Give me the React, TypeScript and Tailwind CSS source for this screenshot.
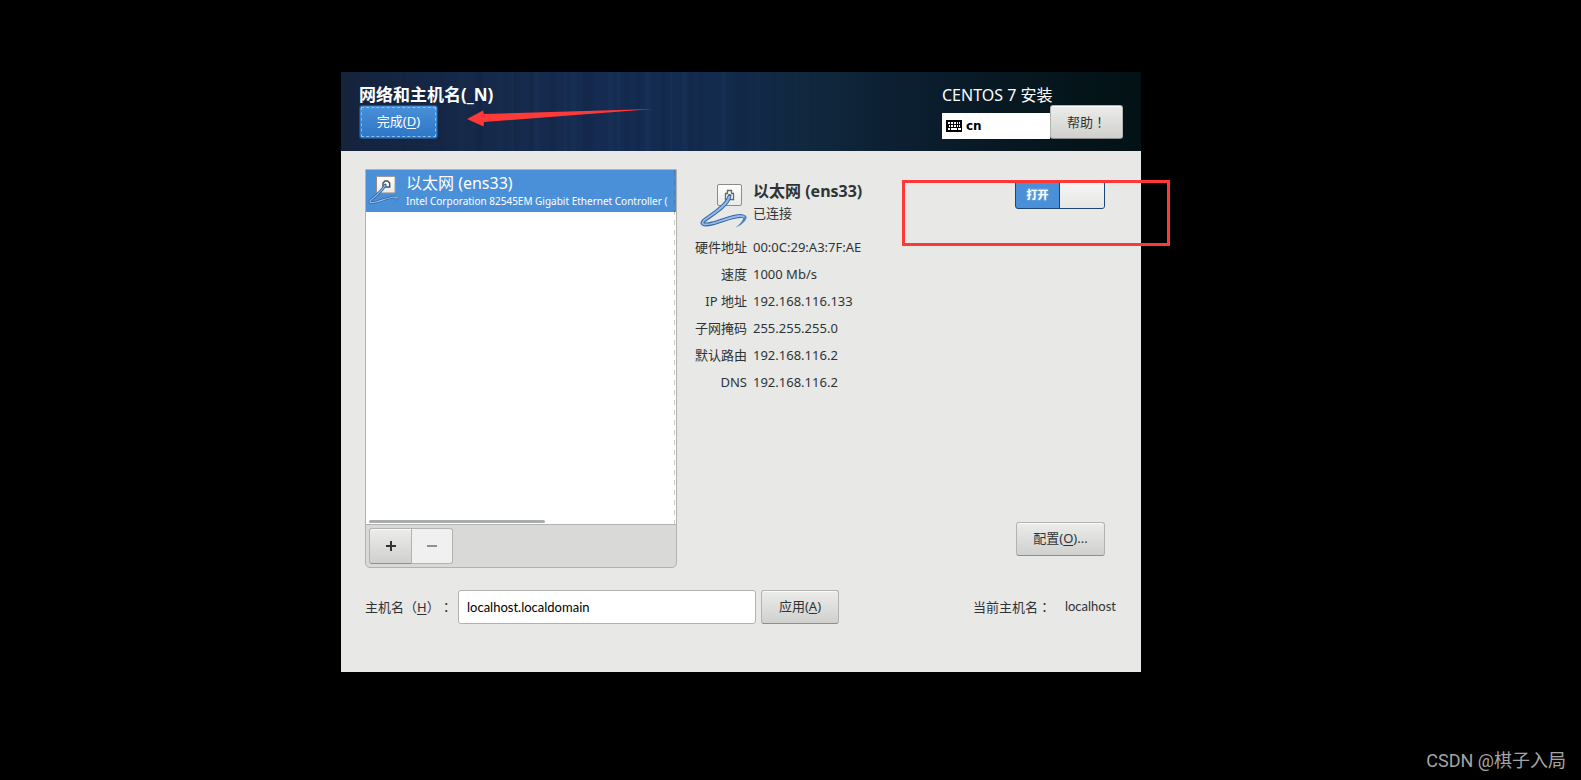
import { useState, type ReactNode } from "react";

const gray =
  "border border-[#b2b2ae] border-b-[#8e8e8a] bg-gradient-to-b from-[#ececeb] to-[#d0d0ce] text-[#2e3436] shadow-[inset_0_1px_0_#fbfbfb]";

function Button({ children, className = "" }: { children: ReactNode; className?: string }) {
  return (
    <button type="button" className={`flex h-[34px] items-center justify-center rounded-[3px] text-[13px] ${gray} ${className}`}>
      <span>{children}</span>
    </button>
  );
}

function Key({ children }: { children: ReactNode }) {
  return <span className="underline underline-offset-2">{children}</span>;
}

function Mark({ children }: { children: ReactNode }) {
  return <span className="inline-block font-['Noto_Sans_CJK_TC',sans-serif]">{children}</span>;
}

function WiredIcon({ className, small = false }: { className: string; small?: boolean }) {
  return (
    <svg viewBox="0 0 48 48" className={className} aria-hidden="true">
      <defs>
        <linearGradient id="plate" x1="0" y1="0" x2="0" y2="1">
          <stop offset="0" stopColor="#ffffff" />
          <stop offset="1" stopColor="#e9e9e7" />
        </linearGradient>
      </defs>
      {small ? (
        <>
          <rect x="12.700" y="2" width="28" height="25" rx="1" fill="url(#plate)" stroke="#8b8d88" strokeWidth="1.500" />
          <path d="M22.500 18v-6l3-3h4l3 3v6z" fill="#fff" stroke="#4e504d" strokeWidth="2.200" />
        </>
      ) : (
        <>
          <rect x="17.500" y="1.500" width="24" height="21" rx="1.500" fill="url(#plate)" stroke="#8b8d88" />
          <path d="M25.500 16.500v-6h2v-3h4v3h2v6z" fill="#fff" stroke="#666864" strokeWidth="1.300" />
        </>
      )}
      <path
        d="M41 31.500C47 31.500 48 34 45 38C43 40.500 39.500 43 35.500 44.500C39 42 43 38 43 35.500C43 34.500 41 34.500 40 34.500Z"
        fill="#4f82c2"
      />
      <path
        d={small ? "M26 15C20 26 8 34 3.500 38.500C1 42 6 42 12 40.500C22 38 32 33 41 33" : "M29.500 13C28 23 9 33 3.500 38C0 42 6 42 12 40.500C22 38 32 33 41 33"}
        fill="none"
        stroke="#3566a4"
        strokeWidth="4"
        strokeLinecap="round"
      />
      <path
        d={small ? "M26 15C20 26 8 34 3.500 38.500C1 42 6 42 12 40.500C22 38 32 33 41 33L44.500 34" : "M29.500 13C28 23 9 33 3.500 38C0 42 6 42 12 40.500C22 38 32 33 41 33L44.500 34"}
        fill="none"
        stroke="#94bbea"
        strokeWidth="1.800"
      />
    </svg>
  );
}

function KeyboardIcon() {
  return (
    <svg viewBox="0 0 16 12" className="h-3 w-4" shapeRendering="crispEdges" aria-hidden="true">
      <rect width="16" height="12" rx="1" fill="#000" />
      <path
        d="M2 2h2v2H2zM5 2h2v2H5zM8 2h2v2H8zM11 2h1v2h-1zM13 2h1v2h-1zM3 5h1v2H3zM5 5h2v2H5zM8 5h2v2H8zM11 5h1v2h-1zM13 5h1v2h-1zM2 8h2v2H2zM5 8h6v2H5zM12 8h3v2h-3z"
        fill="#fff"
      />
    </svg>
  );
}

const details = [
  ["硬件地址", "00:0C:29:A3:7F:AE"],
  ["速度", "1000 Mb/s"],
  ["IP 地址", "192.168.116.133"],
  ["子网掩码", "255.255.255.0"],
  ["默认路由", "192.168.116.2"],
  ["DNS", "192.168.116.2"],
];

function Header() {
  return (
    <header className="relative flex h-[79px] justify-between bg-[linear-gradient(90deg,#15233d_0%,#15294a_18%,#152c52_34%,#132b4e_46%,#11283f_58%,#0c1f31_70%,#06171f_86%,#021214_100%)] px-[18px] text-white">
      <div
        className="absolute inset-0 bg-[repeating-linear-gradient(90deg,transparent_0_7px,rgba(90,140,200,0.04)_9px_12px,transparent_15px_23px,rgba(0,0,0,0.05)_25px_28px,transparent_31px_37px),repeating-linear-gradient(90deg,transparent_0_11px,rgba(120,150,190,0.05)_12px_13px,transparent_14px_29px,rgba(0,0,0,0.05)_30px_34px,transparent_35px_53px)] [mask-image:linear-gradient(90deg,transparent_5%,black_25%,black_42%,transparent_60%)]"
        aria-hidden="true"
      />
      <div className="relative flex flex-col pt-[11px]">
        <h1 className="h-[22px] text-[17px] leading-[24px] font-bold">网络和主机名(_N)</h1>
        <button
          type="button"
          className="flex h-[34px] w-[79px] items-center justify-center rounded-[3px] border border-[#1c5187] bg-gradient-to-b from-[#4a90d9] to-[#2a76c6] text-[13px] outline-1 -outline-offset-3 outline-dashed outline-[#8fbbe8]"
        >
          <span>完成(<Key>D</Key>)</span>
        </button>
      </div>
      <svg viewBox="0 0 186 18" className="absolute top-[37px] left-[126px] h-[18px] w-[186px]" aria-hidden="true">
        <path d="M0 10L16 1.500L17 5L186 0L17 13L16.500 17.500Z" fill="#ff3838" />
      </svg>
      <div className="relative flex w-[181px] flex-col pt-[11px]">
        <p className="h-[22px] text-[16px] leading-[24px]">CENTOS 7 安装</p>
        <div className="flex items-end">
          <div className="flex h-[26px] grow items-center gap-1 bg-white pl-1 font-['DejaVu_Sans',sans-serif] text-[12px] font-bold text-black">
            <KeyboardIcon />
            <span>cn</span>
          </div>
          <Button className="w-[73px]">
            帮助<Mark>！</Mark>
          </Button>
        </div>
      </div>
    </header>
  );
}

function DeviceList() {
  return (
    <section className="flex w-[312px] flex-col overflow-hidden rounded-b-[5px] border border-[#b2b2ae] bg-[#d9d9d7]">
      <div className="relative flex grow flex-col bg-white">
        <div className="flex h-[42px] bg-[#4a90d9] text-white">
          <WiredIcon small className="mt-[5px] ml-[2px] h-8 w-8 shrink-0" />
          <div className="ml-[6px] whitespace-nowrap">
            <p className="h-[24px] text-[16px] leading-[26px]">以太网 (ens33)</p>
            <p className="text-[10px] leading-[14px]">Intel Corporation 82545EM Gigabit Ethernet Controller (</p>
          </div>
        </div>
        <div className="absolute inset-y-0 right-[1px] w-px bg-[repeating-linear-gradient(180deg,rgba(80,80,80,0.3)_0_5px,transparent_5px_10px)]" />
        <div className="mt-auto mb-[1px] ml-[3px] h-[3px] w-[176px] rounded-full bg-[#a9adad]" />
      </div>
      <div className="flex h-[43px] border-t border-[#b2b2ae] p-[3px]">
        <button type="button" aria-label="Add" className={`flex h-9 w-[43px] items-center justify-center rounded-l-[3px] ${gray}`}>
          <svg viewBox="0 0 10 10" className="size-[10px]" aria-hidden="true">
            <path d="M4 0h2v4h4v2H6v4H4V6H0V4h4z" fill="#2e3436" />
          </svg>
        </button>
        <button
          type="button"
          disabled
          aria-label="Remove"
          className="flex h-9 w-[41px] items-center justify-center rounded-r-[3px] border border-l-0 border-[#b2b2ae] bg-[#f0f0f0]"
        >
          <svg viewBox="0 0 10 10" className="size-[10px]" aria-hidden="true">
            <path d="M0 4h10v2H0z" fill="#8d9091" />
          </svg>
        </button>
      </div>
    </section>
  );
}

function Details() {
  const [on, setOn] = useState(true);
  return (
    <section className="relative flex grow flex-col pt-[12px] pr-9 pb-3 pl-[17px]">
      <div className="flex">
        <WiredIcon className="mt-[2px] ml-[6px] h-12 w-12" />
        <div className="ml-[5px]">
          <h2 className="h-[22px] text-[16px] leading-[20px] font-bold">以太网 (ens33)</h2>
          <p className="text-[13px] leading-[20px]">已连接</p>
        </div>
        <button
          type="button"
          role="switch"
          aria-checked={on}
          aria-label="以太网"
          onClick={() => setOn(!on)}
          className="ml-auto flex h-[28px] w-[90px] overflow-hidden rounded-[3px] border border-[#1b4573] bg-[#4a90d9] text-[11px] leading-[26px] font-bold text-white"
        >
          <span className="flex-1 [text-shadow:0_0_2px_#ffffff99]">打开</span>
          <span className="w-[45px] self-stretch border-l border-[#1b4573] bg-gradient-to-b from-[#f6f6f6] to-[#e6e6e4]" />
        </button>
      </div>
      <dl className="mt-[3px] grid grid-cols-[53px_1fr] gap-x-[6px] text-[13px] leading-[27px]">
        {details.map(([label, value]) => (
          <div key={label} className="contents">
            <dt className="text-right">{label}</dt>
            <dd>{value}</dd>
          </div>
        ))}
      </dl>
      <Button className="mt-auto w-[89px] self-end">
        配置(<Key>O</Key>)...
      </Button>
      <div
        className="pointer-events-none absolute top-[11px] -right-[29px] h-[66px] w-[268px] border-3 border-[#ff3838]"
        aria-hidden="true"
      />
    </section>
  );
}

export default function App() {
  return (
    <div className="flex min-h-screen flex-col bg-black pt-[72px] font-['Noto_Sans','Noto_Sans_CJK_SC',sans-serif] text-[#2e3436]">
      <div className="flex justify-center pr-[99px]">
        <main className="flex min-h-[600px] w-[800px] flex-col bg-[#e8e8e6]">
          <Header />
          <div className="flex h-[417px] pt-[18px] pl-6">
            <DeviceList />
            <Details />
          </div>
          <form className="mt-[22px] flex items-center pr-[25px] pl-6 text-[13px]" onSubmit={(e) => e.preventDefault()}>
            <label htmlFor="host" className="w-[93px] whitespace-nowrap">
              主机名（<Key>H</Key>）<Mark>：</Mark>
            </label>
            <input
              id="host"
              defaultValue="localhost.localdomain"
              className="h-[34px] w-[298px] rounded-[3px] border border-[#b2b2ae] bg-white px-2 font-['Lato',sans-serif] text-black"
            />
            <Button className="ml-[5px] w-[78px]">
              应用(<Key>A</Key>)
            </Button>
            <span className="ml-auto">
              当前主机名<Mark>：</Mark>
            </span>
            <output className="ml-[14px] font-['Lato',sans-serif]">localhost</output>
          </form>
        </main>
      </div>
      <footer className="mt-auto pr-[15px] pb-[7px] text-right font-['Roboto','Noto_Sans_CJK_SC',sans-serif] text-[18px] leading-[24px] text-[#a5a5a5]">
        CSDN @棋子入局
      </footer>
    </div>
  );
}
